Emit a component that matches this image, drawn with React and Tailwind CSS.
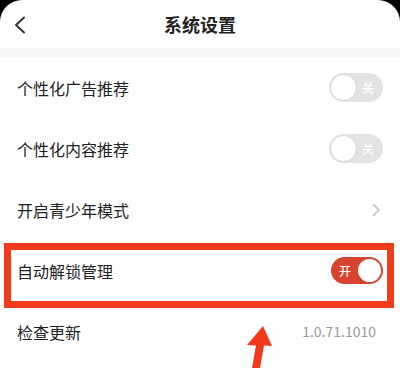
import React from "react";

const Toggle = ({ on }) =>
  on ? (
    <div className="flex items-center justify-between w-[52px] h-[27px] rounded-full bg-[#d8432f] pl-[8px] pr-[2px]">
      <span className="text-[12px] leading-none text-white font-medium">开</span>
      <div className="w-[23px] h-[23px] rounded-full bg-white"></div>
    </div>
  ) : (
    <div className="flex items-center justify-between w-[54px] h-[29px] rounded-full bg-[#e3e3e3] pl-[1px] pr-[9px]">
      <div className="w-[27px] h-[27px] rounded-full bg-white border border-[#d6d6d6]"></div>
      <span className="text-[12px] leading-none text-white font-medium">关</span>
    </div>
  );

const Row = ({ label, children, highlight }) => (
  <div className="relative flex items-center justify-between h-[61px] pl-[17px] pr-[17px]">
    <span className="text-[16px] text-[#222]">{label}</span>
    {children}
    {highlight && (
      <div className="absolute left-[4px] right-[6px] top-[3px] -bottom-[7px] border-[7px] border-[#f23a1c]"></div>
    )}
  </div>
);

export default function App() {
  return (
    <div
      className="w-[400px] h-[368px] bg-black overflow-hidden"
      style={{ fontFamily: '"Noto Sans CJK SC", "Noto Sans", sans-serif' }}
    >
      <div className="relative bg-white h-full rounded-t-[22px]">
        {/* header */}
        <div className="relative flex items-center justify-center h-[48px]">
          <svg className="absolute left-[13px] top-[16px]" width="14" height="18" viewBox="0 0 14 18">
            <path d="M11 1.5 L3 9 L11 16.5" fill="none" stroke="#333" strokeWidth="2" strokeLinecap="round" strokeLinejoin="round" />
          </svg>
          <span className="text-[18px] font-bold text-[#222]">系统设置</span>
        </div>
        <div className="h-[9px] bg-[#f5f5f5]"></div>

        <Row label="个性化广告推荐">
          <Toggle />
        </Row>
        <Row label="个性化内容推荐">
          <Toggle />
        </Row>
        <Row label="开启青少年模式">
          <svg width="9" height="14" viewBox="0 0 9 14" className="mr-[2px]">
            <path d="M1.5 1.5 L7 7 L1.5 12.5" fill="none" stroke="#bbb" strokeWidth="1.5" strokeLinecap="round" strokeLinejoin="round" />
          </svg>
        </Row>
        <Row label="自动解锁管理" highlight>
          <Toggle on />
        </Row>
        <Row label="检查更新">
          <span className="text-[14px] text-[#9a9a9a] mr-[7px]">1.0.71.1010</span>
        </Row>

        {/* annotation arrow */}
        <svg className="absolute left-[240px] top-[320px]" width="40" height="48" viewBox="0 0 40 48">
          <path d="M23 6 L32 26 L24 25.5 L20 48 L12 48 L16 25.5 L7 25 Z" fill="#f2391b" />
        </svg>
      </div>
    </div>
  );
}
